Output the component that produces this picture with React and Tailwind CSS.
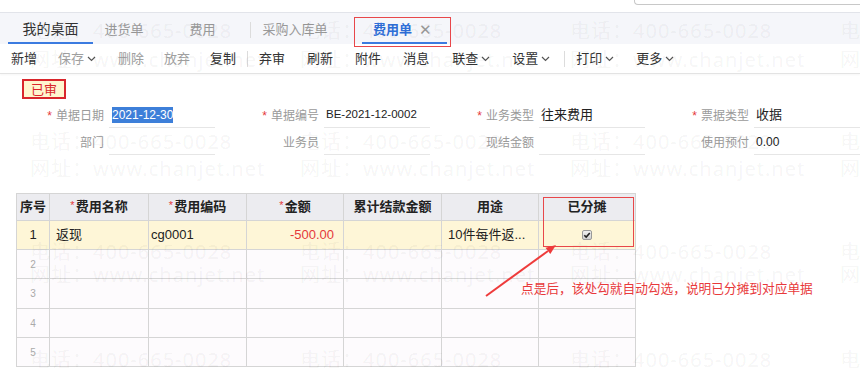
import React from "react";

const wmX = [30, 300, 570, 840];
const telY = [21, 132, 242, 350];
const webY = [50, 159, 265];

function Chevron() {
  return (
    <svg width="9" height="6" viewBox="0 0 9 6" className="ml-[3px] mt-[1px]">
      <path d="M1 1l3.5 3.5L8 1" fill="none" stroke="#555" strokeWidth="1.2" />
    </svg>
  );
}

function Sep() {
  return <div className="w-px h-[16px] bg-[#dcdcdc]" />;
}

function Label({ req, children }) {
  return (
    <div className="w-[108px] flex items-center justify-end text-[12px] text-[#9a9a9a]">
      {req && <span className="text-[#e5393b] mr-[4px] text-[12px]">*</span>}
      {children}
    </div>
  );
}

function Field({ children }) {
  return (
    <div className="ml-[5px] w-[110px] h-[25px] border-b border-[#e6e6e6] flex items-center text-[13px] text-[#222] pl-[2px] whitespace-nowrap">
      {children}
    </div>
  );
}

function HeadCell({ w, req, children }) {
  return (
    <div className={`${w} h-full border-r border-[#d5d5d5] flex items-center justify-center text-[13px] font-bold text-[#222]`}>
      {req && <span className="text-[#e5393b] font-normal text-[11px] mr-[1px] -mt-[3px]">*</span>}
      {children}
    </div>
  );
}

function EmptyRow({ n, h }) {
  return (
    <div className={`flex ${h} border-b border-[#d5d5d5] bg-[#fdfbfd]`}>
      <div className="w-[33px] h-full border-r border-[#d5d5d5] flex items-center justify-center text-[10px] text-[#aaa]">{n}</div>
      <div className="w-[99px] h-full border-r border-[#d5d5d5]" />
      <div className="w-[98px] h-full border-r border-[#d5d5d5]" />
      <div className="w-[97px] h-full border-r border-[#d5d5d5]" />
      <div className="w-[98px] h-full border-r border-[#d5d5d5]" />
      <div className="w-[97px] h-full border-r border-[#d5d5d5]" />
      <div className="w-[97px] h-full border-r border-[#d5d5d5]" />
    </div>
  );
}

export default function App() {
  return (
    <div className="relative w-[860px] h-[368px] overflow-hidden bg-white font-['Liberation_Sans','Noto_Sans_CJK_SC',sans-serif] text-[#333]">
      {/* top strip with search box edge */}
      <div className="h-[12px] flex justify-end">
        <div className="w-[226px] h-[5px] border-l border-b border-[#c8c8c8] rounded-bl-[4px]" />
      </div>

      {/* tab bar */}
      <div className="h-[32px] bg-[#f5f6fa] border-t border-[#e2e4ea] flex items-stretch">
        <div className="ml-[8px] w-[85px] pt-[4px] flex items-center justify-center border-b-2 border-[#3b7be0] text-[14px] text-[#333]">我的桌面</div>
        <div className="w-[62px] pt-[4px] flex items-center justify-center border-b-2 border-transparent text-[13px] text-[#999]">进货单</div>
        <div className="w-[95px] pt-[4px] flex items-center justify-center border-b-2 border-transparent text-[13px] text-[#999]">费用</div>
        <div className="pt-[4px] flex items-center border-b-2 border-transparent"><Sep /></div>
        <div className="w-[88px] pt-[4px] flex items-center justify-center border-b-2 border-transparent text-[13px] text-[#999]">采购入库单</div>
        <div className="ml-[23px] w-[85px] pt-[4px] pl-[11px] flex items-center border-b-2 border-[#3b7be0] text-[13px]">
          <span className="text-[#2f6fd8] font-semibold">费用单</span>
          <span className="ml-[7px] text-[#999] text-[15px] font-light leading-none">✕</span>
        </div>
      </div>

      {/* toolbar */}
      <div className="h-[30px] border-b border-[#e3e3e3] shadow-[0_1px_2px_rgba(0,0,0,0.04)] flex items-center text-[13px] whitespace-nowrap">
        <span className="ml-[11px] text-[#333]">新增</span>
        <span className="ml-[21px] text-[#a0a0a0] flex items-center">保存<Chevron /></span>
        <span className="ml-[22px] text-[#a0a0a0]">删除</span>
        <span className="ml-[20px] text-[#a0a0a0]">放弃</span>
        <span className="ml-[20px] text-[#333]">复制</span>
        <div className="ml-[11px]"><Sep /></div>
        <span className="ml-[11px] text-[#333]">弃审</span>
        <span className="ml-[22px] text-[#333]">刷新</span>
        <span className="ml-[22px] text-[#333]">附件</span>
        <span className="ml-[22px] text-[#333]">消息</span>
        <span className="ml-[23px] text-[#333] flex items-center">联查<Chevron /></span>
        <span className="ml-[22px] text-[#333] flex items-center">设置<Chevron /></span>
        <div className="ml-[14px]"><Sep /></div>
        <span className="ml-[11px] text-[#333] flex items-center">打印<Chevron /></span>
        <span className="ml-[22px] text-[#333] flex items-center">更多<Chevron /></span>
      </div>

      {/* status badge */}
      <div className="mt-[5px] ml-[22px] w-[44px] h-[20px] border-2 border-[#d9262c] bg-[#fff6cf] flex items-center justify-center text-[13px] text-[#d9262c] leading-none">已审</div>

      {/* form */}
      <div className="mt-[4px] grid grid-cols-[215px_215px_215px_215px] gap-y-[2px]">
        <div className="flex">
          <Label req>单据日期</Label>
          <Field><span className="ml-[1px] bg-[#3d7fd9] text-white text-[12px] leading-[16px]">2021-12-30</span></Field>
        </div>
        <div className="flex">
          <Label req>单据编号</Label>
          <Field><span className="text-[11.5px]">BE-2021-12-0002</span></Field>
        </div>
        <div className="flex">
          <Label req>业务类型</Label>
          <Field>往来费用</Field>
        </div>
        <div className="flex">
          <Label req>票据类型</Label>
          <Field>收据</Field>
        </div>
        <div className="flex">
          <Label>部门</Label>
          <Field />
        </div>
        <div className="flex">
          <Label>业务员</Label>
          <Field />
        </div>
        <div className="flex">
          <Label>现结金额</Label>
          <Field />
        </div>
        <div className="flex">
          <Label>使用预付</Label>
          <Field><span className="text-[12px]">0.00</span></Field>
        </div>
      </div>

      {/* table */}
      <div className="mt-[38px] ml-[16px] w-[620px] border-l border-t border-[#d5d5d5]">
        <div className="flex h-[27px] border-b border-[#d5d5d5] bg-[#ececf0]">
          <HeadCell w="w-[33px]">序号</HeadCell>
          <HeadCell w="w-[99px]" req>费用名称</HeadCell>
          <HeadCell w="w-[98px]" req>费用编码</HeadCell>
          <HeadCell w="w-[97px]" req>金额</HeadCell>
          <HeadCell w="w-[98px]">累计结款金额</HeadCell>
          <HeadCell w="w-[97px]">用途</HeadCell>
          <HeadCell w="w-[97px]">已分摊</HeadCell>
        </div>
        <div className="flex h-[29px] border-b border-[#d5d5d5] bg-[#fef6d7] text-[13px] text-[#222]">
          <div className="w-[33px] h-full border-r border-[#d5d5d5] flex items-center justify-center">1</div>
          <div className="w-[99px] h-full border-r border-[#d5d5d5] flex items-center pl-[6px]">返现</div>
          <div className="w-[98px] h-full border-r border-[#d5d5d5] flex items-center pl-[2px]">cg0001</div>
          <div className="w-[97px] h-full border-r border-[#d5d5d5] flex items-center justify-end pr-[9px] text-[#e5393b]">-500.00</div>
          <div className="w-[98px] h-full border-r border-[#d5d5d5]" />
          <div className="w-[97px] h-full border-r border-[#d5d5d5] flex items-center pl-[6px] whitespace-nowrap">10件每件返...</div>
          <div className="w-[97px] h-full border-r border-[#d5d5d5] flex items-center justify-center">
            <svg width="10" height="10" viewBox="0 0 10 10">
              <defs>
                <linearGradient id="cbg" x1="0" y1="0" x2="0" y2="1">
                  <stop offset="0" stopColor="#f2f2f2" />
                  <stop offset="1" stopColor="#cfcfcf" />
                </linearGradient>
              </defs>
              <rect x="0.5" y="0.5" width="9" height="9" rx="1.5" fill="url(#cbg)" stroke="#9a9a9a" />
              <path d="M2.3 5.2l1.9 1.9 3.6-4.2" fill="none" stroke="#222" strokeWidth="1.6" />
            </svg>
          </div>
        </div>
        <EmptyRow n="2" h="h-[29px]" />
        <EmptyRow n="3" h="h-[30px]" />
        <EmptyRow n="4" h="h-[29px]" />
        <EmptyRow n="5" h="h-[29px]" />
      </div>

      {/* watermark */}
      <div className="absolute inset-0 pointer-events-none font-['Noto_Sans','Noto_Sans_CJK_SC',sans-serif] text-[20px] leading-[20px] tracking-[1px] text-[rgba(0,0,0,0.055)] whitespace-nowrap">
        {telY.map((y) =>
          wmX.map((x) => (
            <span key={`t${x}-${y}`} className="absolute" style={{ left: x, top: y }}>电话：400-665-0028</span>
          ))
        )}
        {webY.map((y) =>
          wmX.map((x) => (
            <span key={`w${x}-${y}`} className="absolute" style={{ left: x, top: y }}>网址：www.chanjet.net</span>
          ))
        )}
      </div>

      {/* annotation boxes */}
      <div className="absolute left-[354px] top-[17px] w-[97px] h-[30px] border border-[#e8474a] pointer-events-none" />
      <div className="absolute left-[543px] top-[197px] w-[91px] h-[50px] border border-[#e8474a] pointer-events-none" />

      {/* arrow */}
      <svg className="absolute left-0 top-0 pointer-events-none" width="860" height="368">
        <line x1="486" y1="296" x2="548" y2="251" stroke="#ee3b3b" strokeWidth="2" />
        <polygon points="556,245 550.3,254.1 545.5,247.7" fill="#ee3b3b" />
      </svg>

      <div className="absolute left-[521px] top-[280px] text-[12.7px] leading-[16px] text-[#e8393b] whitespace-nowrap font-['Noto_Sans_CJK_SC',sans-serif]">
        点是后，该处勾就自动勾选，说明已分摊到对应单据
      </div>
    </div>
  );
}
